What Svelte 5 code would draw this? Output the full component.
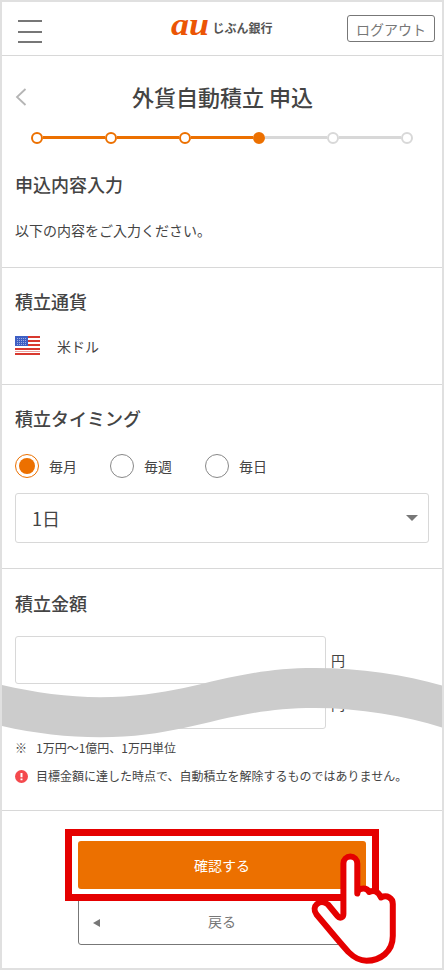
<script>
  const steps = ['done', 'done', 'done', 'current', 'todo', 'todo'];
  const timings = ['毎月', '毎週', '毎日'];
  const stripes = [0, 4, 8, 12, 17];

  let timing = '毎月';
  let amount = '';
  let target = '';
</script>

<div class="screen">
  <header>
    <button class="menu" aria-label="メニュー">
      <span></span>
      <span></span>
      <span></span>
    </button>
    <div class="logo">
      <span class="au">au</span>
      <span class="bank">じぶん銀行</span>
    </div>
    <button class="logout">ログアウト</button>
  </header>

  <main>
    <section class="intro">
      <div class="title-row">
        <svg class="back-arrow" width="12" height="18" viewBox="0 0 12 18">
          <path d="M10.5 1 L2 9 L10.5 17" fill="none" stroke="#b5b5b5" stroke-width="1.8" />
        </svg>
        <h1>外貨自動積立 申込</h1>
      </div>
      <div class="steps">
        {#each steps as step, i}
          {#if i > 0}
            <span class="line" class:active={step !== 'todo'}></span>
          {/if}
          <span class="dot {step}"></span>
        {/each}
      </div>
      <h2>申込内容入力</h2>
      <p class="lead">以下の内容をご入力ください。</p>
    </section>

    <section class="currency">
      <h2>積立通貨</h2>
      <div class="currency-row">
        <svg width="25" height="19" viewBox="0 0 25 19">
          <rect width="25" height="19" fill="#fff" />
          {#each stripes as y}
            <rect {y} width="25" height="2" fill="#d8392f" />
          {/each}
          <rect y="15" width="25" height="1" fill="#eda39e" />
          <rect width="13" height="10" fill="#3f5fc4" />
          {#each [2.5, 4.5, 6.5, 8.5] as y}
            <path d="M2 {y} H12" stroke="#b4c0ea" stroke-width="0.8" stroke-dasharray="1 1" />
          {/each}
        </svg>
        <span>米ドル</span>
      </div>
    </section>

    <section class="timing">
      <h2>積立タイミング</h2>
      <div class="radios">
        {#each timings as label}
          <label>
            <input type="radio" bind:group={timing} value={label} />
            <span>{label}</span>
          </label>
        {/each}
      </div>
      <div class="select">
        <span>1日</span>
        <svg width="12" height="6" viewBox="0 0 12 6">
          <path d="M0 0 H12 L6 6 Z" fill="#777" />
        </svg>
      </div>
    </section>

    <section class="amount">
      <h2>積立金額</h2>
      <div class="field">
        <input type="text" bind:value={amount} />
        <span>円</span>
      </div>
      <div class="field short">
        <input type="text" bind:value={target} />
        <span>円</span>
      </div>
      <div class="note">
        <span class="mark">※</span>
        <span>1万円～1億円、1万円単位</span>
      </div>
      <div class="note warn">
        <svg width="13" height="13" viewBox="0 0 13 13">
          <circle cx="6.5" cy="6.5" r="6.5" fill="#f4494d" />
          <path d="M6.5 3 V7.3 M6.5 8.5 V10.3" stroke="#fff" stroke-width="2" />
        </svg>
        <span>目標金額に達した時点で、自動積立を解除するものではありません。</span>
      </div>
    </section>

    <div class="actions">
      <button class="confirm">確認する</button>
      <button class="back">
        <svg width="7" height="8" viewBox="0 0 7 8">
          <path d="M7 0 V8 L0 4 Z" fill="#777" />
        </svg>
        <span>戻る</span>
      </button>
    </div>
  </main>

  <!-- band that marks the skipped part of the form -->
  <svg class="wave" width="440" height="72" viewBox="2 667 440 72">
    <path
      d="M2 685 C35 692.5 68 697.2 100 697.2 C190 697.2 225 668 315 668 C360 668 405 675 442 685.5 V727.5 C405 716 360 708 315 708 C225 708 190 737.3 100 737.3 C68 737.3 35 733.5 2 726 Z"
      fill="#ccc"
    />
  </svg>

  <div class="highlight"></div>

  <svg class="hand" width="90" height="114" viewBox="310 852 90 114">
    <path
      d="M343.4 863.5 A6.95 6.95 0 0 1 357.3 863.5 V893.5 C357.5 890.5 359.5 888.6 363.5 888.6 C366.5 888.6 368 889.8 369.2 892 C373.5 890 378 891 381 897.5 C387 894.5 392.8 898 392.8 904 V936 C392.8 952 380 960.7 366.5 960.7 C359 960.7 354 957.5 349 952.5 C345 948.5 341 943.5 316.5 914.5 C310.5 906.5 320 898 328 904.5 L337.5 916 C340 919 343.4 917.5 343.4 914 Z"
      fill="#fff"
      stroke="#e50000"
      stroke-width="6"
      stroke-linejoin="round"
    />
  </svg>
</div>

<style>
  :global(body) {
    margin: 0;
    background: #fff;
  }

  .screen {
    position: relative;
    box-sizing: border-box;
    width: 444px;
    height: 970px;
    border: 2px solid #e0e0e0;
    background: #fff;
    color: #444;
    font-family: 'Noto Sans CJK JP', sans-serif;
    font-size: 14px;
    line-height: 20px;
    overflow: hidden;
  }

  button {
    font-family: inherit;
    font-size: 14px;
    background: #fff;
    padding: 0;
  }

  h1,
  h2,
  p {
    margin: 0;
  }

  header {
    display: flex;
    align-items: flex-start;
    justify-content: space-between;
    height: 53px;
    padding: 0 7px 0 16px;
    border-bottom: 1px solid #d8d8d8;
  }

  .menu {
    display: flex;
    flex-direction: column;
    justify-content: space-between;
    width: 24px;
    height: 23px;
    margin: 18px 0 0;
    border: none;
  }

  .menu span {
    height: 2px;
    background: #777;
  }

  .logo {
    display: flex;
    align-items: center;
    margin: 14px 0 0 55px;
  }

  .au {
    width: 41px;
    color: #eb5505;
    font-family: 'Liberation Serif', serif;
    font-size: 31px;
    font-weight: bold;
    font-style: italic;
    line-height: 24px;
    transform: translateY(-3px) scaleX(1.16);
    transform-origin: left;
  }

  .bank {
    font-size: 12px;
    font-weight: bold;
    color: #555;
  }

  .logout {
    width: 88px;
    height: 27px;
    margin: 13px 0 0;
    border: 1px solid #777;
    border-radius: 3px;
    color: #777;
  }

  section {
    box-sizing: border-box;
    padding: 0 13px;
    border-bottom: 1px solid #d8d8d8;
  }

  h2 {
    font-size: 18px;
    font-weight: 500;
    line-height: 26px;
  }

  .intro {
    height: 212px;
    padding-top: 24px;
  }

  .title-row {
    display: flex;
    align-items: center;
    height: 32px;
  }

  .back-arrow {
    margin-top: 2px;
  }

  h1 {
    flex: 1;
    padding-right: 11px;
    font-size: 22px;
    font-weight: 500;
    text-align: center;
  }

  .steps {
    display: flex;
    align-items: center;
    margin: 20px 16px 0;
    height: 12px;
  }

  .dot {
    box-sizing: border-box;
    width: 12px;
    height: 12px;
    border: 2px solid #ec7000;
    border-radius: 50%;
  }

  .dot.current {
    background: #ec7000;
  }

  .dot.todo {
    border-color: #d8d8d8;
  }

  .line {
    flex: 1;
    height: 3px;
    margin-bottom: 1px;
    background: #d8d8d8;
  }

  .line.active {
    background: #ec7000;
  }

  .intro h2 {
    margin-top: 27px;
  }

  .lead {
    margin-top: 23px;
  }

  .currency {
    height: 117px;
    padding-top: 20px;
  }

  .currency-row {
    display: flex;
    gap: 17px;
    margin-top: 22px;
  }

  .timing {
    height: 184px;
    padding-top: 20px;
  }

  .radios {
    display: flex;
    margin-top: 23px;
  }

  .radios label {
    display: flex;
    align-items: center;
    width: 95px;
  }

  .radios label span {
    margin-top: -1px;
  }

  .radios input {
    appearance: none;
    box-sizing: border-box;
    width: 24px;
    height: 24px;
    margin: 0 10px 0 0;
    border: 1px solid #888;
    border-radius: 50%;
  }

  .radios input:checked {
    border-color: #ec7000;
    padding: 3px;
    background: #ec7000 content-box;
  }

  .select {
    display: flex;
    align-items: center;
    justify-content: space-between;
    box-sizing: border-box;
    height: 50px;
    margin-top: 15px;
    padding: 0 10px 0 16px;
    border: 1px solid #d8d8d8;
    border-radius: 3px;
    font-size: 18px;
  }

  .amount {
    height: 242px;
    padding-top: 21px;
  }

  .field {
    display: flex;
    align-items: center;
    gap: 5px;
    margin-top: 20px;
  }

  .field input {
    box-sizing: border-box;
    width: 311px;
    height: 48px;
    padding: 0 16px;
    border: 1px solid #d8d8d8;
    border-radius: 3px;
    font-size: 18px;
  }

  .field.short {
    align-items: flex-start;
    margin-top: 16px;
  }

  .field.short input {
    height: 29px;
  }

  .field.short span {
    margin-top: -6px;
  }

  .note {
    display: flex;
    align-items: center;
    margin-top: 10px;
    font-size: 12px;
    line-height: 18px;
  }

  .mark {
    width: 21px;
  }

  .note svg {
    margin-right: 8px;
  }

  .actions {
    display: flex;
    flex-direction: column;
    gap: 8px;
    width: 288px;
    padding: 30px 0 0 76px;
  }

  .actions button {
    box-sizing: border-box;
    height: 48px;
    border-radius: 3px;
  }

  .confirm {
    border: none;
    background: #ec7000;
    color: #fff;
  }

  .back {
    display: flex;
    align-items: center;
    border: 1px solid #777;
    color: #777;
  }

  .back svg {
    margin: 4px 0 0 14px;
  }

  .back span {
    flex: 1;
    padding-right: 21px;
  }

  .wave {
    position: absolute;
    top: 665px;
    left: 0;
  }

  .highlight {
    position: absolute;
    top: 827px;
    left: 63px;
    box-sizing: border-box;
    width: 314px;
    height: 72px;
    border: 7px solid #e50000;
  }

  .hand {
    position: absolute;
    top: 850px;
    left: 308px;
  }
</style>
